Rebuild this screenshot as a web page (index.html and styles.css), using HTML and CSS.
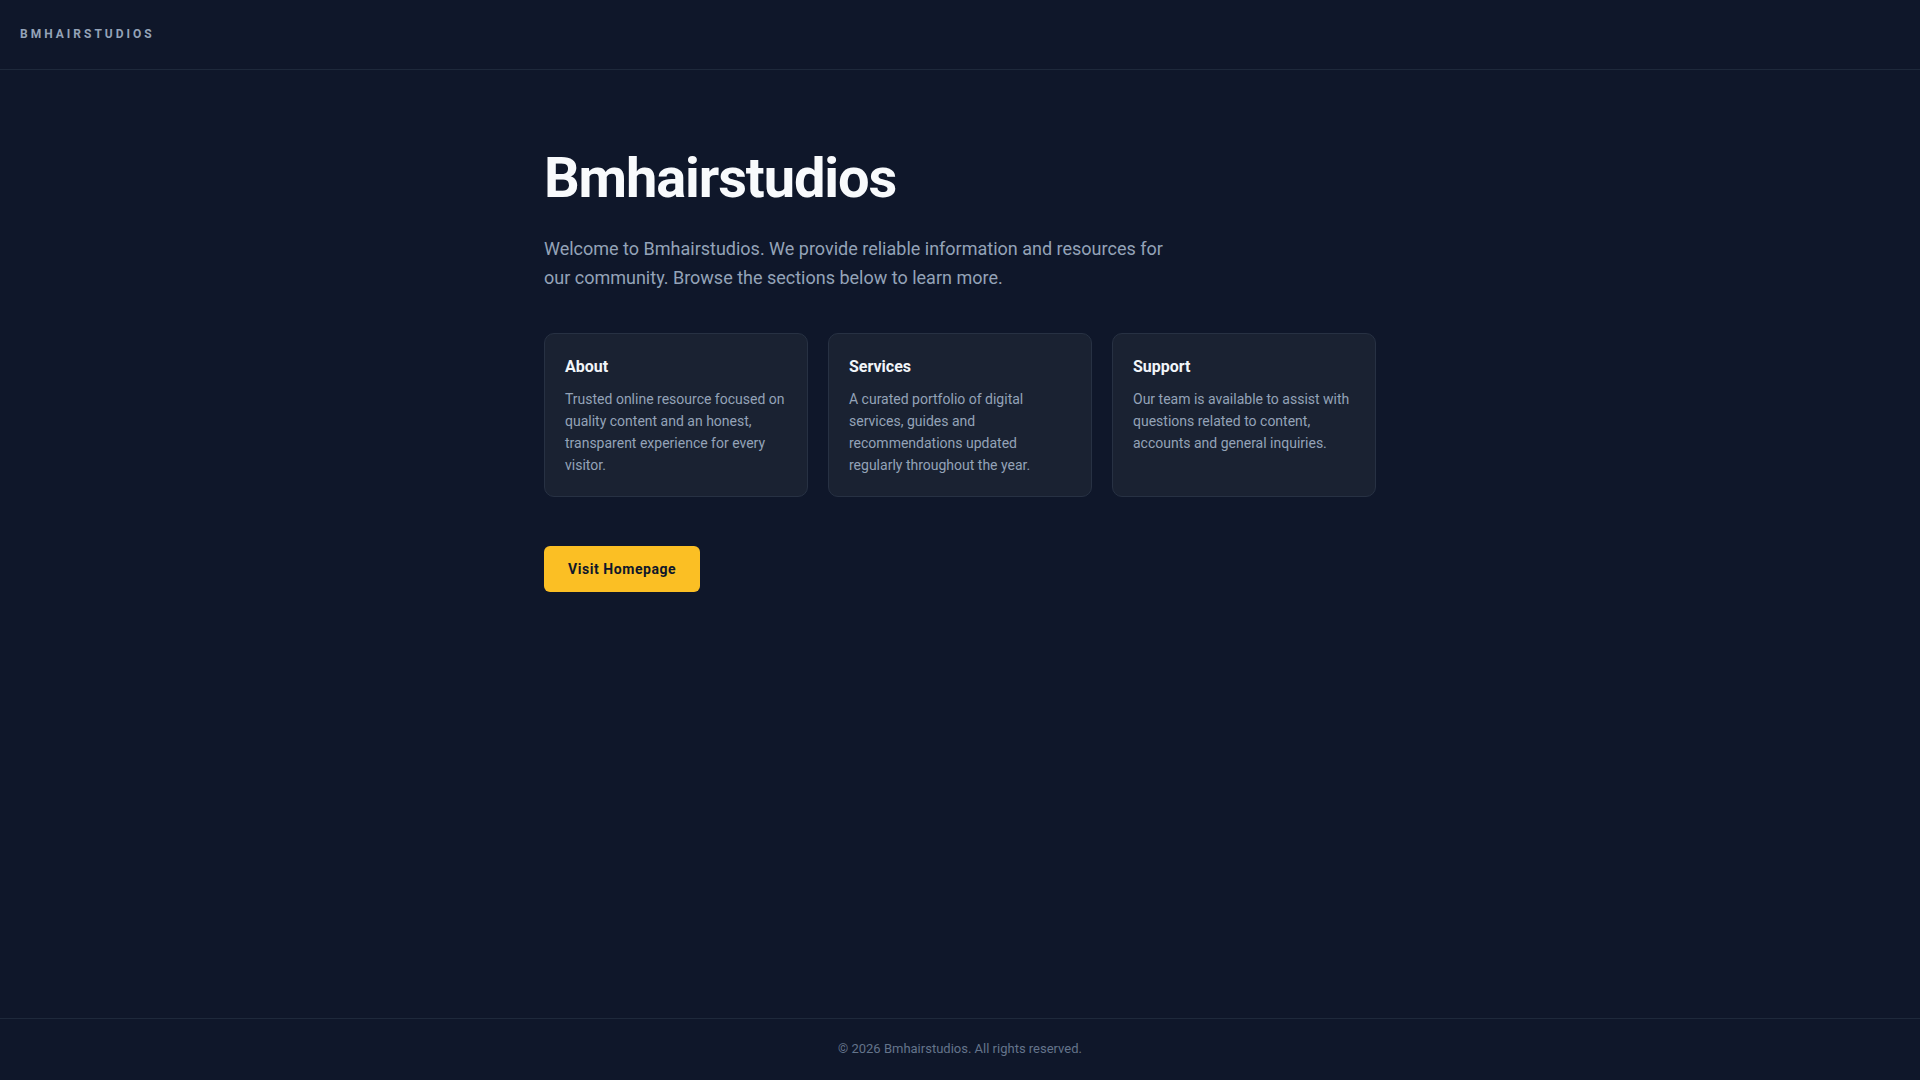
FILE: index.html
```html
<!DOCTYPE html>
<html lang="en">
<head>
<meta charset="utf-8">
<title>Bmhairstudios</title>
<link rel="stylesheet" href="styles.css">
</head>
<body>
<div class="page">
  <header class="site-header">
    <span class="logo">Bmhairstudios</span>
  </header>
  <main class="main">
    <div class="container">
      <h1 class="title">Bmhairstudios</h1>
      <p class="lead">Welcome to Bmhairstudios. We provide reliable information and resources for our community. Browse the sections below to learn more.</p>
      <div class="cards">
        <div class="card">
          <h2 class="card-title">About</h2>
          <p class="card-text">Trusted online resource focused on quality content and an honest, transparent experience for every visitor.</p>
        </div>
        <div class="card">
          <h2 class="card-title">Services</h2>
          <p class="card-text">A curated portfolio of digital services, guides and recommendations updated regularly throughout the year.</p>
        </div>
        <div class="card">
          <h2 class="card-title">Support</h2>
          <p class="card-text">Our team is available to assist with questions related to content, accounts and general inquiries.</p>
        </div>
      </div>
      <a class="btn" href="#">Visit Homepage</a>
    </div>
  </main>
  <footer class="site-footer">© 2026 Bmhairstudios. All rights reserved.</footer>
</div>
</body>
</html>
```

FILE: styles.css
```css
* { box-sizing: border-box; }
html, body { margin: 0; padding: 0; }
body {
  background: #0f172a;
  color: #e2e8f0;
  font-family: Roboto, "Liberation Sans", Arial, sans-serif;
}
.page {
  min-height: 100vh;
  display: flex;
  flex-direction: column;
}
.site-header {
  height: 70px;
  padding: 0 20px;
  display: flex;
  align-items: center;
  border-bottom: 1px solid #1e293b;
}
.logo {
  font-size: 12px;
  font-weight: 700;
  letter-spacing: 0.25em;
  text-transform: uppercase;
  color: #94a3b8;
  line-height: 20px;
  margin-top: -1px;
}
.main {
  flex: 1;
  padding: 78px 20px 80px;
}
.container {
  max-width: 832px;
  margin: 0 auto;
}
.title {
  margin: 0;
  font-size: 56px;
  line-height: 1.1;
  font-weight: 700;
  letter-spacing: -0.02em;
  color: #f8fafc;
}
.lead {
  margin: 24px 0 0;
  max-width: 640px;
  font-size: 18px;
  line-height: 1.625;
  color: #94a3b8;
}
.cards {
  margin-top: 41px;
  display: grid;
  grid-template-columns: repeat(3, 1fr);
  gap: 20px;
}
.card {
  background: #1a2232;
  border: 1px solid #273143;
  border-radius: 10px;
  padding: 21px 20px 20px;
}
.card-title {
  margin: 0 0 9px;
  font-size: 16px;
  line-height: 24px;
  font-weight: 700;
  color: #f1f5f9;
}
.card-text {
  margin: 0;
  font-size: 14px;
  line-height: 22px;
  color: #94a3b8;
}
.btn {
  display: inline-block;
  margin-top: 49px;
  background: #fbbf24;
  color: #0f172a;
  text-decoration: none;
  font-size: 14px;
  font-weight: 700;
  line-height: 20px;
  letter-spacing: 0.04em;
  padding: 13px 24px;
  border-radius: 6px;
}
.site-footer {
  border-top: 1px solid #1e293b;
  padding: 20px 20px 21px;
  text-align: center;
  font-size: 13px;
  line-height: 20px;
  color: #64748b;
}
```
